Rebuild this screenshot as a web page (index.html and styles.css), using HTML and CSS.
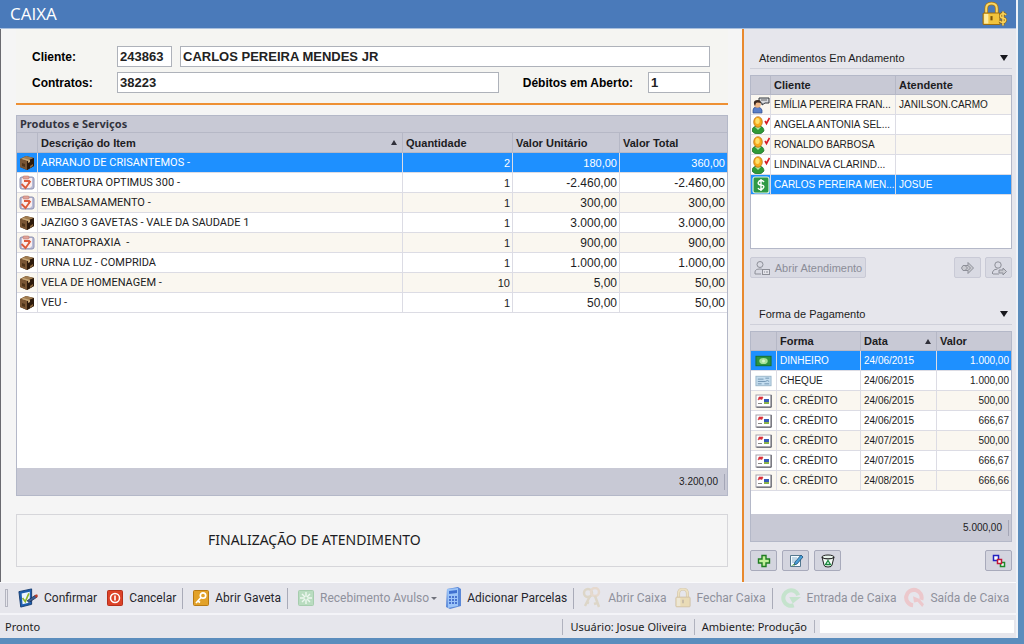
FILE: index.html
```html
<!DOCTYPE html>
<html lang="pt-BR">
<head>
<meta charset="utf-8">
<title>Caixa</title>
<link rel="stylesheet" href="styles.css">
</head>
<body>
<svg class="sprite" aria-hidden="true">
  <symbol id="box" viewBox="0 0 16 16">
    <path d="M1 4l6-3 8 2v8l-7 4-7-3z" fill="#4a3018"/>
    <path d="M1 4l6-3 8 2-7 3z" fill="#a07c50"/>
    <path d="M1 4l7 2v9l-7-3z" fill="#7a5634"/>
    <path d="M8 6l7-3v8l-7 4z" fill="#2c1a0c"/>
    <path d="M4 3l7 2v2l-2 1V6L3 4z" fill="#c8a878"/>
    <path d="M3 8l3 1v3l-3-1z" fill="#4e341a"/>
    <path d="M11 11l3-2v2l-3 2z" fill="#8a6438"/>
  </symbol>
  <symbol id="service" viewBox="0 0 16 16">
    <rect x="1" y="2" width="14" height="12" rx="2" fill="#b9bcd6" stroke="#8e90b0"/>
    <path d="M3 3h10v8l-2 2H3z" fill="#fbeeee"/>
    <rect x="4" y="1" width="6" height="3" rx="1" fill="#e0a49a" stroke="#b8746a" stroke-width=".6"/>
    <path d="M2.500 9l4 4 5-7M5 6h5v3" fill="none" stroke="#dc5a3c" stroke-width="1.800"/>
  </symbol>
  <symbol id="talk" viewBox="0 0 18 18">
    <path d="M7 2h10v5h-4l-3 2V7H7z" fill="#d7dade" stroke="#32363c"/>
    <path d="M9 4h6" stroke="#666"/>
    <path d="M1 17v-3q0-3 4-3t5 3v3z" fill="#5a7fc8" stroke="#2e4c8c" stroke-width=".7"/>
    <circle cx="5.500" cy="8.500" r="3.300" fill="#f0b98a"/>
    <path d="M2 8q-1-4 4-4 3 0 3 3-4-1-5 0l-1 3z" fill="#3c2a20"/>
  </symbol>
  <symbol id="person" viewBox="0 0 18 18">
    <path d="M0 15q0-5 6-5t6 5q-2 3-6 3t-6-3z" fill="#2f9a38" stroke="#1d6a26" stroke-width=".7"/>
    <path d="M3 11l3 3 3-3z" fill="#b4e6a4"/>
    <ellipse cx="6" cy="6" rx="4.300" ry="5.300" fill="#f6a81c" stroke="#b9690e" stroke-width=".7"/>
    <ellipse cx="5.500" cy="5" rx="2.200" ry="3" fill="#ffe06a"/>
    <path d="M13 5l1.500 2.500L17.500 2" fill="none" stroke="#d81e28" stroke-width="1.700"/>
  </symbol>
  <symbol id="dollar" viewBox="0 0 18 18">
    <rect x="1" y="1" width="16" height="16" rx="2" fill="#2f9a46" stroke="#dff3e0" stroke-width="1.200"/>
    <path d="M12 6q-1-1.500-3-1.500T6.300 6.500 9 9t2.700 2.300T9 13.500 6 12M9 3v12" fill="none" stroke="#fff" stroke-width="1.400"/>
  </symbol>
  <symbol id="cash" viewBox="0 0 18 12">
    <rect x="1" y="1" width="16" height="10" fill="#2d9440" stroke="#17702a"/>
    <ellipse cx="9" cy="6" rx="4.500" ry="3.300" fill="#a5e39a"/>
    <circle cx="9" cy="6" r="1.600" fill="#d6f5ca"/>
  </symbol>
  <symbol id="cheque" viewBox="0 0 18 12">
    <rect x="1" y="1" width="16" height="10" fill="#c3dcee" stroke="#9ab6ca"/>
    <path d="M3 4h6M11 3h4M3 6.500h8l2-1 2 1M3 9h4M10 9h5" stroke="#6f93b0" fill="none"/>
  </symbol>
  <symbol id="card" viewBox="0 0 17 14">
    <rect x="1" y="1" width="15" height="12" fill="#fff" stroke="#a4a4ae"/>
    <path d="M1.500 13.200h14.700V1" stroke="#55555f" fill="none"/>
    <path d="M3 6l1-3h4l-1 2.500-2-.5z" fill="#d8303c" stroke="#d8303c" stroke-width=".6"/>
    <path d="M3 9.500h4" stroke="#888"/>
    <rect x="9" y="5" width="5" height="3" fill="#3558b8"/><rect x="9" y="8" width="5" height="2" fill="#8ab54a"/>
  </symbol>
  <symbol id="lock" viewBox="0 0 18 22">
    <path d="M4 11V6q0-5 5-5t5 5v5" fill="none" stroke="#a87812" stroke-width="3.400"/>
    <path d="M4 11V6q0-5 5-5t5 5v5" fill="none" stroke="#fbd766" stroke-width="2"/>
    <rect x="1" y="10" width="16" height="11" rx="1" fill="#f2c33c" stroke="#9c6c0e"/>
    <path d="M2 11h4v9H2z" fill="#fdeca0"/>
    <path d="M9 13v4" stroke="#7c540a" stroke-width="2"/>
  </symbol>
</svg>

<div class="window">
  <header class="titlebar">
    <h1>CAIXA</h1>
    <svg class="titlelock" viewBox="0 0 26 26"><use href="#lock" width="19" height="26"/><path d="M24 14q-1-1.500-3-1.500t-2.500 2 2.500 2.500 2.500 2.500-2.500 2-3.500-1.500M21 10.500v14" fill="none" stroke="#8f6510" stroke-width="2.800"/><path d="M24 14q-1-1.500-3-1.500t-2.500 2 2.500 2.500 2.500 2.500-2.500 2-3.500-1.500M21 10.500v14" fill="none" stroke="#fbd45c" stroke-width="1.600"/></svg>
  </header>

  <div class="content">
    <main class="left">
      <form class="client">
        <div class="line">
          <label class="first" for="cod">Cliente:</label>
          <input id="cod" class="code" value="243863">
          <input class="grow" aria-label="Nome do cliente" value="CARLOS PEREIRA MENDES JR">
        </div>
        <div class="line">
          <label class="first" for="contr">Contratos:</label>
          <input id="contr" class="grow" value="38223">
          <label class="debts" for="deb">Débitos em Aberto:</label>
          <input id="deb" class="short" value="1">
        </div>
      </form>

      <section class="grid products">
        <h2>Produtos e Serviços</h2>
        <table>
          <colgroup><col class="w-icon"><col><col class="w-qty"><col class="w-num"><col class="w-num"></colgroup>
          <thead><tr><th></th><th><span class="sort">Descrição do Item</span></th><th>Quantidade</th><th>Valor Unitário</th><th>Valor Total</th></tr></thead>
          <tbody>
            <tr class="selected"><td><svg><use href="#box"/></svg></td><td>ARRANJO DE CRISANTEMOS -</td><td>2</td><td>180,00</td><td>360,00</td></tr>
            <tr><td><svg><use href="#service"/></svg></td><td>COBERTURA OPTIMUS 300 -</td><td>1</td><td>-2.460,00</td><td>-2.460,00</td></tr>
            <tr><td><svg><use href="#service"/></svg></td><td>EMBALSAMAMENTO -</td><td>1</td><td>300,00</td><td>300,00</td></tr>
            <tr><td><svg><use href="#box"/></svg></td><td>JAZIGO 3 GAVETAS - VALE DA SAUDADE 1</td><td>1</td><td>3.000,00</td><td>3.000,00</td></tr>
            <tr><td><svg><use href="#service"/></svg></td><td>TANATOPRAXIA&nbsp; -</td><td>1</td><td>900,00</td><td>900,00</td></tr>
            <tr><td><svg><use href="#box"/></svg></td><td>URNA LUZ - COMPRIDA</td><td>1</td><td>1.000,00</td><td>1.000,00</td></tr>
            <tr><td><svg><use href="#box"/></svg></td><td>VELA DE HOMENAGEM -</td><td>10</td><td>5,00</td><td>50,00</td></tr>
            <tr><td><svg><use href="#box"/></svg></td><td>VEU -</td><td>1</td><td>50,00</td><td>50,00</td></tr>
          </tbody>
        </table>
        <div class="total"><span>3.200,00</span></div>
      </section>

      <div class="stage">FINALIZAÇÃO DE ATENDIMENTO</div>
    </main>

    <aside class="side">
      <h2 class="group">Atendimentos Em Andamento</h2>
      <section class="grid queue">
        <table>
          <colgroup><col class="w-side"><col><col class="w-att"></colgroup>
          <thead><tr><th></th><th>Cliente</th><th>Atendente</th></tr></thead>
          <tbody>
            <tr><td><svg><use href="#talk"/></svg></td><td>EMÍLIA PEREIRA FRAN...</td><td>JANILSON.CARMO</td></tr>
            <tr><td><svg><use href="#person"/></svg></td><td>ANGELA ANTONIA SEL...</td><td></td></tr>
            <tr><td><svg><use href="#person"/></svg></td><td>RONALDO BARBOSA</td><td></td></tr>
            <tr><td><svg><use href="#person"/></svg></td><td>LINDINALVA CLARIND...</td><td></td></tr>
            <tr class="selected"><td><svg><use href="#dollar"/></svg></td><td>CARLOS PEREIRA MEN...</td><td>JOSUE</td></tr>
          </tbody>
        </table>
      </section>
      <div class="buttons">
        <button class="wide" disabled><svg viewBox="0 0 16 16" fill="none" stroke="#8d8f98"><circle cx="6" cy="4.500" r="3"/><path d="M1 14v-2q0-3 5-3 2 0 3 1M1 14h6"/><rect x="8.500" y="9.500" width="7" height="5" fill="#e4e4ea"/><path d="M10 12h1M12 12h2"/></svg>Abrir Atendimento</button>
        <button class="push" disabled aria-label="Encaminhar"><svg viewBox="0 0 16 16" fill="#c9cad0" stroke="#8d8f98"><path d="M3 5.500h5V2.500L13.500 8 8 13.500v-3H3L1.500 8z"/><path d="M5 5.500l2.500 2.500L5 10.500M8 5.500l2.500 2.500L8 10.500" fill="none"/></svg></button>
        <button disabled aria-label="Transferir cliente"><svg viewBox="0 0 16 16" fill="none" stroke="#8d8f98"><circle cx="7" cy="5" r="3.200"/><path d="M1.500 14v-2q1-3 5-3M2 14h6"/><path d="M8 10h4V8l3.500 3.500L12 15v-2H8z" fill="#c9cad0"/></svg></button>
      </div>

      <h2 class="group second">Forma de Pagamento</h2>
      <section class="grid payments">
        <table>
          <colgroup><col class="w-side"><col><col class="w-date"><col class="w-val"></colgroup>
          <thead><tr><th></th><th>Forma</th><th><span class="sort">Data</span></th><th>Valor</th></tr></thead>
          <tbody>
            <tr class="selected"><td><svg><use href="#cash"/></svg></td><td>DINHEIRO</td><td>24/06/2015</td><td>1.000,00</td></tr>
            <tr><td><svg><use href="#cheque"/></svg></td><td>CHEQUE</td><td>24/06/2015</td><td>1.000,00</td></tr>
            <tr><td><svg><use href="#card"/></svg></td><td>C. CRÉDITO</td><td>24/06/2015</td><td>500,00</td></tr>
            <tr><td><svg><use href="#card"/></svg></td><td>C. CRÉDITO</td><td>24/06/2015</td><td>666,67</td></tr>
            <tr><td><svg><use href="#card"/></svg></td><td>C. CRÉDITO</td><td>24/07/2015</td><td>500,00</td></tr>
            <tr><td><svg><use href="#card"/></svg></td><td>C. CRÉDITO</td><td>24/07/2015</td><td>666,67</td></tr>
            <tr><td><svg><use href="#card"/></svg></td><td>C. CRÉDITO</td><td>24/08/2015</td><td>666,66</td></tr>
          </tbody>
        </table>
        <div class="total"><span>5.000,00</span></div>
      </section>
      <div class="buttons tools">
        <button aria-label="Adicionar"><svg viewBox="0 0 16 16"><path d="M6 2.500h4V6h3.500v4H10v3.500H6V10H2.500V6H6z" fill="#c2f09a" stroke="#1f7d22" stroke-width="1.400"/></svg></button>
        <button aria-label="Editar"><svg viewBox="0 0 16 16"><path d="M2.500 2.500h10v11h-10z" fill="#f4fbff" stroke="#54788f"/><path d="M4 5h5M4 7h4M4 9h3" stroke="#8fb4cc"/><path d="M6 12l1-3 6-7 2 2-6 7z" fill="#4aa0d8" stroke="#1d4d74" stroke-width=".8"/><path d="M3 13l3-2 1 1z" fill="#4a9a2a"/></svg></button>
        <button aria-label="Excluir"><svg viewBox="0 0 16 16"><ellipse cx="8" cy="4" rx="6" ry="2" fill="#e8f4ec" stroke="#222"/><path d="M2 4l2 8q0 2 4 2t4-2l2-8q-1 2-6 2T2 4z" fill="#f4fbf6" stroke="#222"/><path d="M8 7.500l2.500 4h-5z" fill="none" stroke="#16883c" stroke-width="1.300"/></svg></button>
        <button class="push" aria-label="Parcelar"><svg viewBox="0 0 16 16" fill="#fff" stroke-width="1.500"><rect x="2.500" y="2.500" width="5" height="5" stroke="#2222c0"/><rect x="9.500" y="9.500" width="4" height="4" stroke="#1f8a2a"/><rect x="6.500" y="6.500" width="4" height="4" stroke="#c01838"/></svg></button>
      </div>
    </aside>
  </div>

  <nav class="toolbar">
    <span class="grip"></span>
    <button><svg class="i20" viewBox="0 0 22 22"><path d="M1 4l14-3v17L3 21z" fill="#1d5fb0" stroke="#12386e"/><path d="M4 6l9-2v12l-8 2z" fill="#eef6ff"/><path d="M5 11l3 4 4-9" fill="none" stroke="#8fb62a" stroke-width="1.800"/><path d="M10 14l9-6 2 2-9 6z" fill="#3a5f94" stroke="#1d2c4c" stroke-width=".8"/><path d="M18 8l3-1 1 2-2 2z" fill="#b8402c"/></svg>Confirmar</button>
    <button><svg class="i16" viewBox="0 0 16 16"><rect x=".5" y=".5" width="15" height="15" rx="1" fill="#dc4228" stroke="#b5301c"/><circle cx="8" cy="8" r="4.500" fill="none" stroke="#fff" stroke-width="1.500"/><path d="M8 5.500v5" stroke="#fff" stroke-width="1.600"/></svg>Cancelar</button>
    <span class="sep"></span>
    <button><svg class="i16" viewBox="0 0 16 16"><rect x=".5" y=".5" width="15" height="15" rx="1" fill="#e2a22a" stroke="#b87a14"/><circle cx="10" cy="5.500" r="2.700" fill="none" stroke="#fff" stroke-width="1.700"/><path d="M8 7.500L3 13M5 11l2 1.500" stroke="#fff" stroke-width="1.700" fill="none"/></svg>Abrir Gaveta</button>
    <span class="sep"></span>
    <button class="drop" disabled><svg class="i16" viewBox="0 0 16 16"><rect x=".5" y=".5" width="15" height="15" rx="1" fill="#b9dcc0" stroke="#a6cdae"/><path d="M8 2v12M2 8h12M4 4l8 8M12 4l-8 8" stroke="#eef8f0" stroke-width="1.400"/><circle cx="8" cy="8" r="1.500" fill="#b9dcc0"/></svg>Recebimento Avulso</button>
    <button class="near"><svg class="i16 tall" viewBox="0 0 16 22"><path d="M2 2l11-2 3 2v17l-11 3-4-2z" fill="#5a88d8"/><path d="M2 2l11-1v18l-10 2z" fill="#9cc4f8"/><path d="M4 4l8-1v3l-8 1z" fill="#3f70d0"/><path d="M4 10h8M4 13h8M4 16h8" stroke="#4a74d0" stroke-width="1.800" stroke-dasharray="2 1"/></svg>Adicionar Parcelas</button>
    <span class="sep"></span>
    <button class="near" disabled><svg class="i20" viewBox="0 0 20 22" fill="none" stroke="#ddd6c8" stroke-width="2.500"><circle cx="6" cy="6" r="4"/><circle cx="13" cy="5" r="4" stroke="#e6d9ce"/><path d="M8 9l-5 10M4 15l3 1M13 9l4 11M15 16l-3 1"/></svg>Abrir Caixa</button>
    <button class="near" disabled><svg class="i16 pale tall" viewBox="0 0 18 22"><use href="#lock"/></svg>Fechar Caixa</button>
    <span class="sep"></span>
    <button class="near" disabled><svg class="i20 mint" viewBox="0 0 22 22"><path d="M19 8A8.500 8.500 0 1 0 14 19" fill="none" stroke="currentColor" stroke-width="4.500"/><path d="M9 10l4 7 9-7z" fill="currentColor"/></svg>Entrada de Caixa</button>
    <button class="near" disabled><svg class="i20 rose" viewBox="0 0 22 22"><path d="M19 13A8.500 8.500 0 1 0 10 19" fill="none" stroke="currentColor" stroke-width="4.500"/><path d="M10 9l1 7 4-1 5 6 2-3-5-6z" fill="currentColor"/></svg>Saída de Caixa</button>
  </nav>

  <footer class="status">
    <span class="ready">Pronto</span>
    <span class="cell">Usuário: Josue Oliveira</span>
    <span class="cell">Ambiente: Produção</span>
    <span class="cell last"><span class="meter"></span></span>
  </footer>
</div>
</body>
</html>
```

FILE: styles.css
```css
* { box-sizing: border-box; }
body {
  margin: 0;
  min-height: 100vh;
  display: flex;
  background: #5b8dbd;
  color: #1c1c22;
  font: 11px/16px "Liberation Sans", sans-serif;
}
h1, h2 { margin: 0; font-weight: normal; }
button, input { font: inherit; color: inherit; }
.sprite { position: absolute; width: 0; height: 0; }
.window {
  flex: 1;
  min-width: 0;
  display: flex;
  flex-direction: column;
  margin: 0 6px 6px 0;
  border-right: 2px solid #eef2f8;
  background: #e6e6ec;
}

.titlebar {
  display: flex;
  justify-content: space-between;
  align-items: center;
  height: 29px;
  padding: 0 8px 0 10px;
  background: #4a7aba;
  border-bottom: 1px solid #a9bfdd;
}
.titlebar h1 { color: #fff; font: 17px/28px "Open Sans", sans-serif; }
.titlelock { width: 26px; height: 26px; }

.content { flex: 1; display: flex; }
.left {
  flex: 1;
  min-width: 0;
  display: flex;
  flex-direction: column;
  padding: 0 14px 15px 15px;
  background: #f5f5f5;
  border-left: 1px solid #6a6a70;
  border-right: 2px solid #e8892e;
}

.client {
  display: flex;
  flex-direction: column;
  gap: 5px;
  padding: 17px 18px 10px 16px;
  border-bottom: 2px solid #ee9034;
  background: #f5f5f2;
  font-weight: bold;
}
.line { display: flex; align-items: center; }
.line label { font-size: 12px; color: #000; white-space: nowrap; }
.first { width: 85px; }
.client input {
  height: 21px;
  min-width: 0;
  padding: 0 2px;
  border: 1px solid #aeb2ba;
  background: #fff;
  font-size: 13px;
  color: #222;
}
.client .code { width: 55px; margin-right: 8px; }
.client .grow { flex: 1; }
.client .short { width: 62px; }
.debts { margin: 0 15px 0 24px; }

.grid {
  display: flex;
  flex-direction: column;
  background: #fff;
  border: 1px solid #b4b8c8;
}
.products { flex: 1; margin-top: 10px; }
.products h2 {
  padding: 0 3px;
  background: #c8c9d5;
  border-bottom: 1px solid #b6b8c6;
  font: bold 11px/16px "Noto Sans", sans-serif;
  color: #33343e;
}
table { width: 100%; border-collapse: separate; border-spacing: 0; table-layout: fixed; }
.w-icon { width: 21px; }
.w-qty { width: 110px; }
.w-num { width: 107px; }
.w-side { width: 20px; }
.w-att { width: 115px; }
.payments .w-side { width: 26px; }
.w-date { width: 76px; }
.w-val { width: 74px; }
th, td {
  height: 20px;
  padding: 0 2px 0 3px;
  overflow: hidden;
  white-space: nowrap;
  text-align: left;
  border-right: 1px solid #dcdce4;
  border-bottom: 1px solid #dcdce4;
}
th {
  background: #c8c9d5;
  border-color: #b6b8c6;
  font-weight: bold;
}
.side th { height: 19px; }
.side td { font-size: 10px; }
.queue td { padding-right: 0; }
th:last-child, td:last-child { border-right: 0; }
td:first-child { padding: 0; }
td svg { display: block; width: 16px; height: 16px; margin: 0 auto; }
.queue td svg { width: 18px; height: 18px; }
.payments td svg { width: 17px; height: 14px; }
tbody tr:nth-child(odd) td { background: #faf7f0; }
tbody tr:nth-child(even) td { background: #fff; }
tbody tr.selected td { background: #1e90ff; color: #fff; }
.products td:nth-child(2) { font-family: Roboto, sans-serif; }
.products td:nth-child(n+3), .payments td:last-child { text-align: right; }
.products td:nth-child(n+4) { font-size: 12px; }
.products .selected td:nth-child(n+4) { font-size: 11px; }
.sort { display: flex; justify-content: space-between; align-items: center; padding-right: 3px; }
.sort::after {
  content: "";
  border: 3px solid transparent;
  border-top: 0;
  border-bottom: 5px solid #30303a;
}
.total {
  display: flex;
  justify-content: flex-end;
  align-items: center;
  height: 27px;
  margin-top: auto;
  padding-right: 2px;
  background: #c8c9d5;
  font-size: 10px;
}
.total span { padding-right: 6px; border-right: 1px solid #a4a6b6; }

.stage {
  margin-top: 18px;
  padding: 14px 0 16px 191px;
  border: 1px solid #d6d6da;
  font: 14px/21px "Noto Sans", sans-serif;
}

.side {
  display: flex;
  flex-direction: column;
  width: 272px;
  padding: 17px 4px 11px 6px;
}
.group {
  display: flex;
  justify-content: space-between;
  align-items: center;
  height: 23px;
  padding: 2px 4px 0 9px;
  border-bottom: 1px solid #cfd0da;
  font: 11px/20px "Liberation Sans", sans-serif;
}
.group::after {
  content: "";
  border: 4px solid transparent;
  border-bottom: 0;
  border-top: 6px solid #18181e;
}
.grid.queue { height: 174px; margin-top: 6px; }
.second { margin-top: 24px; }
.grid.payments { flex: 1; margin-top: 6px; }
.buttons { display: flex; align-items: center; gap: 4px; margin-top: 8px; }
.buttons button {
  display: flex;
  justify-content: center;
  align-items: center;
  gap: 5px;
  width: 27px;
  height: 21px;
  padding: 0;
  background: #d4d5df;
  border: 1px solid #a8aabb;
  border-radius: 2px;
  white-space: nowrap;
}
.buttons button:disabled { color: #8b8d98; background: #d9dae3; border-color: #c9cad6; }
.buttons svg { width: 16px; height: 16px; }
.buttons .wide { width: 116px; }
.buttons .push { margin-left: auto; }
.tools { gap: 5px; }

.toolbar {
  display: flex;
  align-items: center;
  height: 33px;
  padding: 0 5px;
  border-top: 1px solid #fafafc;
  border-bottom: 2px solid #f4f4f8;
}
.toolbar button {
  display: flex;
  align-items: center;
  gap: 6px;
  padding: 0;
  margin-left: 10px;
  border: 0;
  background: none;
  font: 12px/16px Roboto, sans-serif;
  color: #26262e;
  white-space: nowrap;
}
.toolbar .near { margin-left: 8px; }
.toolbar button:disabled { color: #8f919c; }
.toolbar svg { height: 22px; flex-shrink: 0; }
.toolbar .i16 { width: 16px; height: 16px; }
.toolbar .tall { height: 22px; }
.i20 { width: 20px; }
.pale { opacity: .3; }
.mint { color: #c5e3cd; }
.rose { color: #ecc8cc; }
.grip { flex-shrink: 0; width: 3px; height: 18px; border: 1px solid #b4b5c0; }
.sep { flex-shrink: 0; width: 1px; height: 21px; margin-left: 6px; background: #a9abb8; }
.drop::after {
  content: "";
  margin-left: -4px;
  border: 3px solid transparent;
  border-bottom: 0;
  border-top-color: #70727c;
}

.status {
  display: flex;
  align-items: center;
  height: 23px;
  padding: 0 2px 0 5px;
  font: 11px/16px "Noto Sans", sans-serif;
}
.ready { flex: 1; }
.cell { padding: 0 7px; border-left: 1px solid #b0b2be; }
.last { padding: 0 0 0 5px; }
.meter { display: block; width: 194px; height: 13px; background: #fff; }
```
